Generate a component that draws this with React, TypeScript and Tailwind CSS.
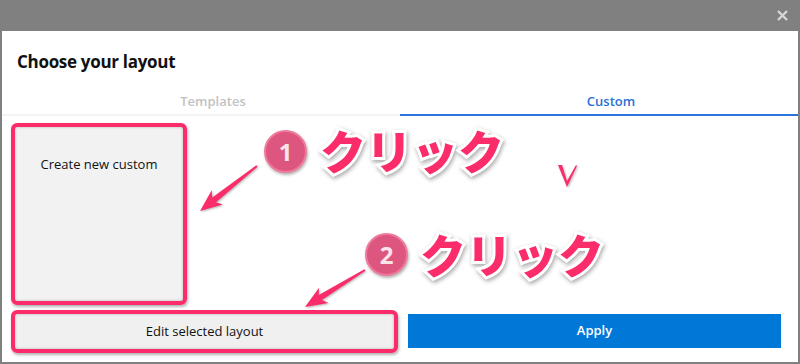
import { FC } from "react";

const Arrow: FC<{ x1: number; y1: number; x2: number; y2: number }> = ({ x1, y1, x2, y2 }) => {
  // tapered arrow from (x1,y1) tail to (x2,y2) tip
  const dx = x2 - x1;
  const dy = y2 - y1;
  const len = Math.sqrt(dx * dx + dy * dy);
  const ux = dx / len;
  const uy = dy / len;
  const nx = -uy;
  const ny = ux;
  const head = 22;
  const bx = x2 - ux * head;
  const by = y2 - uy * head;
  const pts = [
    [x1 + nx * 1, y1 + ny * 1],
    [bx + ux * 4 + nx * 3, by + uy * 4 + ny * 3],
    [bx + nx * 9, by + ny * 9],
    [x2, y2],
    [bx - nx * 9, by - ny * 9],
    [bx + ux * 4 - nx * 3, by + uy * 4 - ny * 3],
    [x1 - nx * 1, y1 - ny * 1],
  ]
    .map((p) => p.join(","))
    .join(" ");
  return <polygon points={pts} fill="#fb2c6a" />;
};

const Badge: FC<{ n: string; className: string }> = ({ n, className }) => (
  <div
    className={`absolute w-[43px] h-[43px] rounded-full bg-[#dd5680] border-2 border-[#f07a9c] shadow-[1px_2px_3px_rgba(0,0,0,0.3)] flex items-center justify-center text-[#fbe4ea] text-[24px] font-bold font-['Noto_Sans',sans-serif] ${className}`}
  >
    {n}
  </div>
);

const Click: FC<{ className: string }> = ({ className }) => (
  <span
    className={`absolute text-[46px] leading-none font-black text-[#fb2c6a] font-['Noto_Sans_CJK_JP',sans-serif] [-webkit-text-stroke:6px_white] [paint-order:stroke_fill] drop-shadow-[1px_2px_2px_rgba(0,0,0,0.35)] ${className}`}
  >
    クリック
  </span>
);

const App: FC = () => {
  return (
    <div className="relative w-[800px] h-[364px] bg-[#808080] flex flex-col font-['Open_Sans',sans-serif] overflow-hidden">
      <div className="h-[31px] flex items-center justify-end pr-[12px] shrink-0">
        <svg width="11" height="11" viewBox="0 0 11 11">
          <path d="M1 1L10 10M10 1L1 10" stroke="#d6d6d6" strokeWidth="2.4" />
        </svg>
      </div>

      <div className="mx-[2px] mb-[2px] flex-1 bg-white flex flex-col">
        <h1 className="pl-[15px] pt-[19px] text-[17px] leading-[24px] font-bold text-[#111] tracking-[-0.3px]">
          Choose your layout
        </h1>

        <div className="mt-[18px] flex text-[13px] font-semibold">
          <div className="flex-1 h-[24px] pl-6 flex items-start justify-center border-b-2 border-[#f4f4f4] text-[#c2c2c2]">
            Templates
          </div>
          <div className="flex-1 h-[24px] pl-6 flex items-start justify-center border-b-2 border-[#2b74db] text-[#2b6fd6]">
            Custom
          </div>
        </div>

        <div className="pl-[13px] pr-[17px] pt-[11px] flex flex-col">
          <div className="relative w-[168px] h-[174px] bg-[#f2f2f2] shadow-[inset_0_0_3px_rgba(0,0,0,0.25)] flex justify-center pt-[29px] text-[13px] leading-[16px] font-medium text-[#111]">
            Create new custom
            <div className="absolute -inset-[4px] rounded-[6px] border-4 border-[#fb2c6a] shadow-[1px_2px_3px_rgba(0,0,0,0.3)]" />
          </div>

          <div className="mt-[13px] flex gap-[14px] text-[13px] font-medium">
            <button className="relative flex-1 h-[35px] bg-[#f0f0f0] shadow-[inset_0_0_3px_rgba(0,0,0,0.25)] text-[#111]">
              Edit selected layout
              <span className="absolute -inset-[4px] rounded-[6px] border-4 border-[#fb2c6a] shadow-[1px_2px_3px_rgba(0,0,0,0.3)]" />
            </button>
            <button className="w-[373px] h-[34px] bg-[#0078d7] text-white font-semibold">Apply</button>
          </div>
        </div>
      </div>

      <svg className="absolute inset-0 pointer-events-none" width="800" height="364" viewBox="0 0 800 364">
        <g style={{ filter: "drop-shadow(1px 1px 1px rgba(0,0,0,0.3))" }}>
          <Arrow x1={257} y1={166} x2={200} y2={211} />
          <Arrow x1={365} y1={270} x2={305} y2={307} />
          <path d="M558 165 L562 165 L567 181 L576 165 L577 166 L567 187 Z" fill="#fb2c6a" />
        </g>
      </svg>

      <Badge n="1" className="left-[264px] top-[130px]" />
      <Badge n="2" className="left-[365px] top-[233px]" />
      <Click className="left-[320px] top-[126px]" />
      <Click className="left-[420px] top-[230px]" />
    </div>
  );
};

export default App;
